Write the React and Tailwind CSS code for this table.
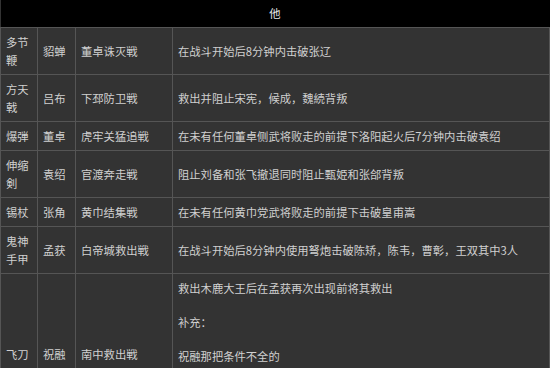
const rows = [
  { weapon: '多节鞭', general: '貂蝉', battle: '董卓诛灭戦', cond: ['在战斗开始后8分钟内击破张辽'] },
  { weapon: '方天戟', general: '吕布', battle: '下邳防卫戦', cond: ['救出并阻止宋宪，候成，魏続背叛'] },
  { weapon: '爆弾', general: '董卓', battle: '虎牢关猛追戦', cond: ['在未有任何董卓侧武将败走的前提下洛阳起火后7分钟内击破袁绍'] },
  { weapon: '伸缩剣', general: '袁绍', battle: '官渡奔走戦', cond: ['阻止刘备和张飞撤退同时阻止甄姫和张郃背叛'] },
  { weapon: '锡杖', general: '张角', battle: '黄巾结集戦', cond: ['在未有任何黄巾党武将败走的前提下击破皇甫嵩'] },
  { weapon: '鬼神手甲', general: '孟获', battle: '白帝城救出戦', cond: ['在战斗开始后8分钟内使用弩炮击破陈矫，陈韦，曹彰，王双其中3人'] },
  { weapon: '飞刀', general: '祝融', battle: '南中救出戦', cond: ['救出木鹿大王后在孟获再次出现前将其救出', '', '补充：', '', '祝融那把条件不全的'], tall: true },
];

export default function App() {
  return (
    <div className="w-[550px] h-[368px] overflow-hidden bg-[#333333] text-[11.3px] text-[#d0d0d0] font-['Noto_Sans_CJK_SC',sans-serif]">
      <table className="w-full table-fixed border-collapse">
        <colgroup>
          <col className="w-[37px]" />
          <col className="w-[38px]" />
          <col className="w-[97px]" />
          <col />
        </colgroup>
        <thead>
          <tr>
            <th colSpan={4} className="h-[27px] bg-black text-[#e8e8e8] font-normal text-center border-b border-[#555]">
              他
            </th>
          </tr>
        </thead>
        <tbody>
          {rows.map((r) => (
            <tr key={r.weapon} className={r.tall ? 'h-[162px]' : ''}>
              <td className="border border-[#555] px-[5px] py-[5px] leading-[18px] align-middle">{r.weapon}</td>
              <td className="border border-[#555] px-[5px] py-[5px] leading-[18px] align-middle">{r.general}</td>
              <td className="border border-[#555] px-[5px] py-[5px] leading-[18px] align-middle">{r.battle}</td>
              <td className={`border border-[#555] px-[5px] leading-[18px] ${r.tall ? 'align-top py-[6px]' : 'align-middle py-[5px]'}`}>
                {r.cond.map((line, i) => (
                  <div key={i} className={r.tall ? 'min-h-[17px] leading-[17px]' : ''}>{line}</div>
                ))}
              </td>
            </tr>
          ))}
        </tbody>
      </table>
    </div>
  );
}
